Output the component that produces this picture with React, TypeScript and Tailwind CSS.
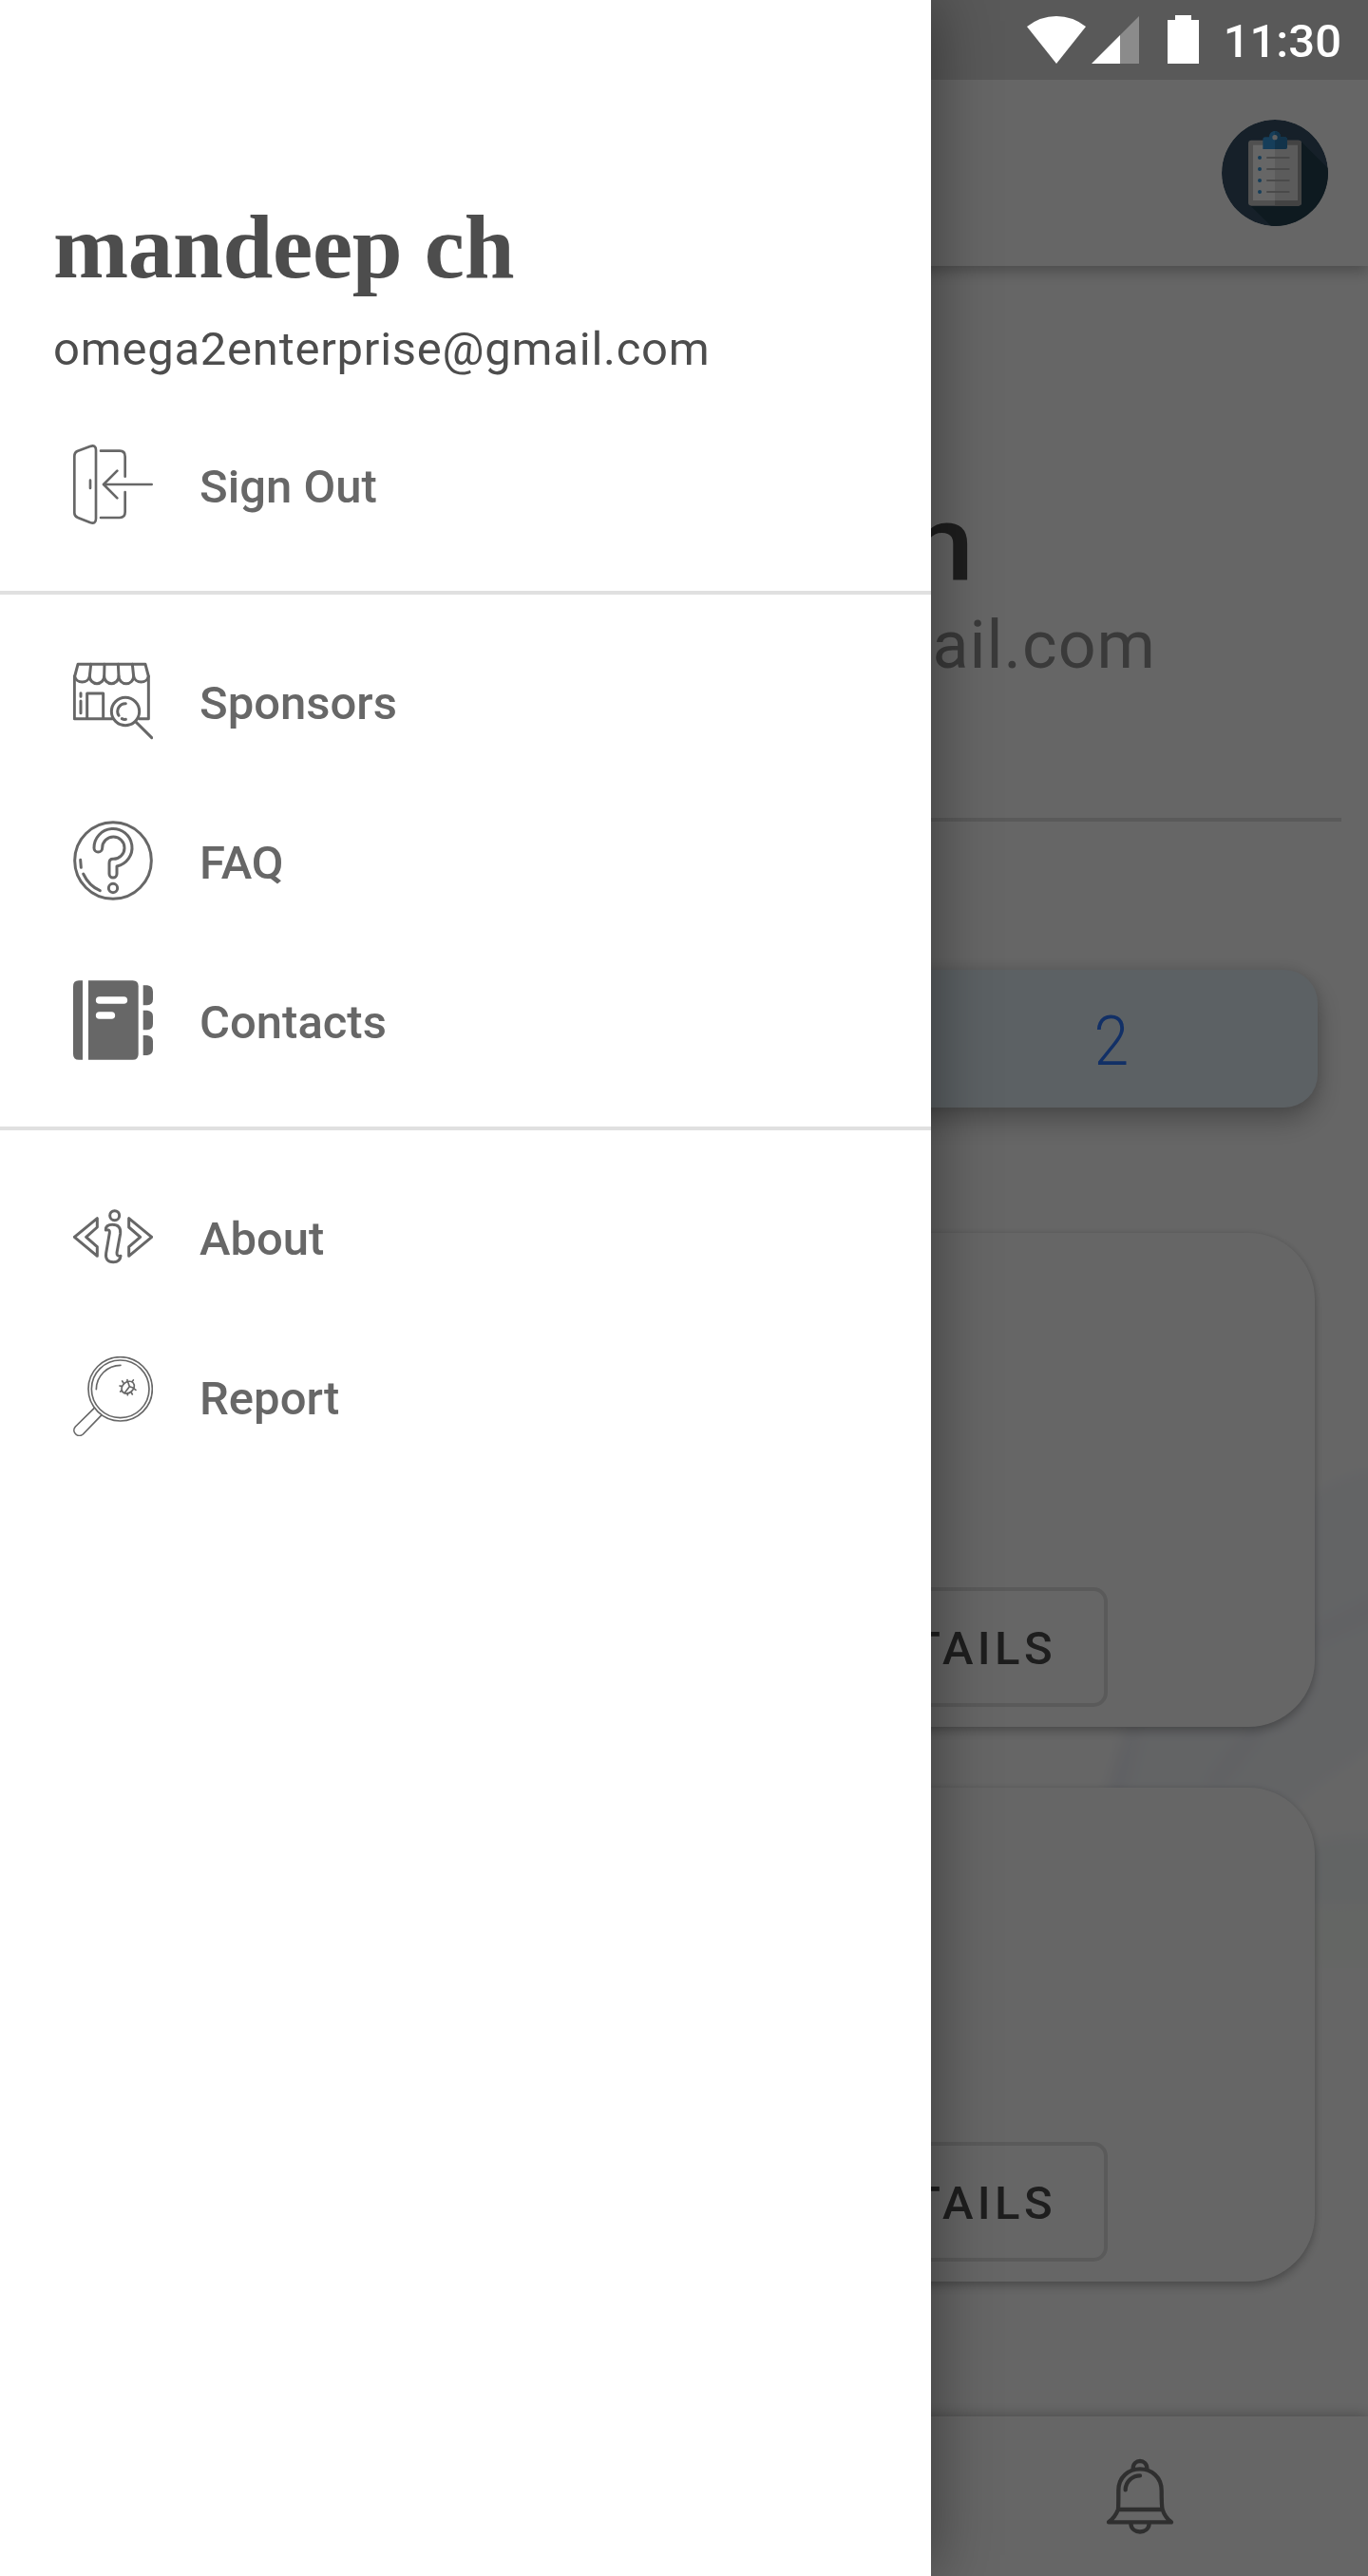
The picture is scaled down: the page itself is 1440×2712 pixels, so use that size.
import React from "react";

type IconProps = { box: string; stroke?: number; children: React.ReactNode };

function Icon({ box, stroke = 7, children }: IconProps) {
  return (
    <svg
      viewBox={box}
      className="size-[84px] shrink-0"
      fill="none"
      stroke="currentColor"
      strokeWidth={stroke}
      strokeLinecap="round"
      strokeLinejoin="round"
    >
      {children}
    </svg>
  );
}

const SignOutIcon = () => (
  <Icon box="51 54 252 252" stroke={8}>
    <path d="M55 90Q55 79 64 75L104 60Q123 53 123 72V288Q123 307 104 300L66 285Q55 281 55 270Z" />
    <path d="M105 167V192M138 74H198Q215 74 215 92V155M215 204V267Q215 285 198 285H138" />
    <path d="M299 180H148M190 137L147 180L190 223" />
  </Icon>
);

const SponsorsIcon = () => (
  <Icon box="51 48 252 252" stroke={9}>
    <path d="M66 58H279L289 96A24 23 0 0 1 242 96A23 23 0 0 1 195 96A23 23 0 0 1 149 96A23 23 0 0 1 103 96A24 23 0 0 1 56 96Z" />
    <path d="M107 58L103 96M150 58L149 96M193 58L195 96M238 58L242 96" />
    <path d="M55 96V230H174M289 96V230H260M95 230V150H146V230M75 149V160M75 174V212" />
    <circle cx="216" cy="207" r="44" />
    <path d="M217 182A25 25 0 0 0 195 220M205 230Q211 233 217 232M250 241L299 290" />
  </Icon>
);

const FaqIcon = () => (
  <Icon box="51 42 252 252" stroke={9}>
    <circle cx="177" cy="168" r="121" />
    <path d="M117 128A60 60 0 1 1 189 186V210A12 12 0 0 1 165 210V176Q165 163 177 163A35 35 0 1 0 143 128A13 13 0 0 1 117 128Z" />
    <circle cx="177" cy="255" r="14" />
    <path d="M74 166L76 190M83 210Q101 248 136 263" />
  </Icon>
);

const ContactsIcon = () => (
  <svg viewBox="51 546 252 252" className="size-[84px] shrink-0" fill="currentColor">
    <path d="M81 547V797H69Q51 797 51 779V565Q51 547 69 547Z" />
    <path d="M99 547H239Q257 547 257 565V779Q257 797 239 797H99Z" />
    <path d="M272 562H285Q303 564 303 582V606Q303 623 285 625H272ZM272 641H285Q303 643 303 660V684Q303 701 285 703H272ZM272 720H285Q303 722 303 739V763Q303 781 285 783H272Z" />
    <path d="M134 609H211M134 657H172" stroke="#fff" strokeWidth="23" strokeLinecap="round" />
  </svg>
);

const AboutIcon = () => (
  <Icon box="51 30 252 252" stroke={9}>
    <path d="M55 157L127 98V126L92 157L127 188V217ZM299 157L227 98V126L263 157L227 188V217Z" />
    <circle cx="182" cy="89" r="15" />
    <path d="M154 135Q153 118 175 118Q203 118 200 146L189 206Q188 219 201 217Q199 236 178 236Q151 236 155 208L166 144Q168 132 154 135Z" />
  </Icon>
);

const ReportIcon = () => (
  <Icon box="51 534 252 252" stroke={5}>
    <circle cx="200" cy="637" r="101" />
    <circle cx="200" cy="637" r="91" />
    <path d="M124 638A77 77 0 0 1 201 562M117 698L58 756A17 17 0 0 0 82 780L139 721" />
    <ellipse cx="224" cy="632" rx="22" ry="17" transform="rotate(-40 224 632)" />
    <path d="M224 615L229 629L214 649M229 629L242 634M222 615V608M210 618L206 612M204 628L198 627M205 642L200 645M223 650V656M234 647L238 654M243 636L249 640M237 614L241 609" />
  </Icon>
);

const BellIcon = () => (
  <Icon box="594 1067 252 252" stroke={13}>
    <path d="M651 1235Q652 1225 652 1175C652 1132 684 1107 720 1107C756 1107 788 1132 788 1175Q788 1225 791 1235Q799 1260 819 1275H621Q641 1260 651 1235H789" />
    <path d="M698 1106C698 1074 742 1074 742 1106M691 1280C694 1314 746 1314 749 1280M674 1173C675 1143 699 1128 720 1128" />
  </Icon>
);

function ClipboardAvatar() {
  return (
    <svg viewBox="978 378 336 336" className="size-28 rounded-full">
      <circle cx="1146" cy="546" r="168" fill="#375268" />
      <path d="M1228 446L1314 532V714H1134L1064 645Z" fill="#234150" />
      <rect x="1062" y="443" width="168" height="207" rx="10" fill="#c8c8c8" />
      <path d="M1146 443H1220Q1230 443 1230 453V640Q1230 650 1220 650H1146Z" fill="#a8a8a8" />
      <path d="M1077 458H1146V633H1077Z" fill="#fff" />
      <path d="M1146 458H1218V633H1146Z" fill="#e3e3e3" />
      <path d="M1108 471V441Q1108 433 1116 433H1128C1128 408 1164 408 1164 433H1177Q1185 433 1185 441V464Q1185 471 1178 471Z" fill="#379be0" />
      <path d="M1146 415Q1164 416 1164 433H1177Q1185 433 1185 441V464Q1185 471 1178 471H1146Z" fill="#2d80b8" />
      <circle cx="1146" cy="434" r="8" fill="#eee" />
      {[498, 534, 570, 606].map((y) => (
        <g key={y}>
          <circle cx="1098" cy={y} r="6" fill="#379be0" />
          <path d={`M1122 ${y}H1190`} stroke="#b9b9b9" strokeWidth="6" strokeLinecap="round" />
        </g>
      ))}
    </svg>
  );
}

function StatusBar() {
  return (
    <div className="absolute inset-x-0 top-0 z-10 flex h-[84px] items-center justify-end bg-black/12 pr-7 text-white">
      <svg viewBox="0 0 182 52" className="mr-[25px] h-[52px] w-[182px]" fill="currentColor">
        <path d="M0 12Q14 1 31 1Q48 1 62 12L31 51Z" />
        <path d="M68 51L98 21V51Z" />
        <path d="M98 21L118 1V51H98Z" opacity=".3" />
        <path d="M148 5H156V0H173V5H181V51H148Z" />
      </svg>
      <span className="pt-[3px] text-[49px] leading-none font-medium">11:30</span>
    </div>
  );
}

function MenuItem({ icon, label }: { icon: React.ReactNode; label: string }) {
  return (
    <a className="flex h-[168px] items-center gap-[49px] pl-[77px] text-[#676767]">
      {icon}
      <span className="pt-1 text-[49px] leading-none font-medium">{label}</span>
    </a>
  );
}

function DetailCard() {
  return (
    <article className="flex h-[520px] items-end justify-end rounded-[70px] bg-white pr-[218px] pb-[21px] shadow-[0_6px_10px_rgba(0,0,0,0.2),0_0_6px_rgba(0,0,0,0.12)]">
      <button className="h-[126px] rounded-[15px] border-4 border-black/12 pt-[3px] pr-[50px] pl-14 text-[49px] leading-none font-medium tracking-[4.4px] text-[#4d4d4d]">
        DETAILS
      </button>
    </article>
  );
}

function Backdrop() {
  return (
    <svg viewBox="0 0 300 820" className="absolute top-[1480px] right-0 h-[820px] w-[300px]">
      <defs>
        <filter id="soft">
          <feGaussianBlur stdDeviation="7" />
        </filter>
      </defs>
      <g filter="url(#soft)">
        <path d="M330 65Q260 70 225 110L140 240L50 340L20 460H180L245 400L330 340V65Z" fill="#f7f9fd" />
        <path d="M225 240Q270 225 330 190V215Q270 235 225 262Z" fill="#f1f2f9" />
        <path d="M48 330L20 420H42L62 330ZM178 335L130 400H144L194 335Z" fill="#eff1f8" />
        <path d="M235 462Q270 450 330 455V525H235Z" fill="#f5f9fb" />
        <path d="M235 530L330 525V590H235Z" fill="#fbfefb" />
      </g>
    </svg>
  );
}

export default function App() {
  return (
    <div className="relative h-[2712px] w-[1440px] overflow-hidden bg-white font-[Roboto,sans-serif]">
      <div className="relative flex h-full flex-col">
        <Backdrop />
        <header className="relative flex h-[280px] items-center justify-end bg-white pt-[84px] pr-[42px] shadow-[0_6px_14px_rgba(0,0,0,0.25)]">
          <ClipboardAvatar />
        </header>
        <main className="relative flex grow flex-col">
          <section className="mx-7 flex h-[585px] flex-col items-center border-b-4 border-black/12 pt-[237px]">
            <h1 className="scale-x-[1.12] pr-1.5 text-[112px] leading-[112px] font-medium tracking-[-8px] text-[#4d4d4d]">mandeep ch</h1>
            <p className="mt-[10px] self-end pr-[195px] text-[70px] leading-[80px] tracking-[1px] text-[#929292]">@gmail.com</p>
          </section>
          <div className="mx-[53px] mt-[156px] flex h-[145px] items-center justify-end rounded-[35px] bg-[#e6f2fa] shadow-[0_14px_28px_rgba(0,0,0,0.26),0_0_14px_rgba(0,0,0,0.12)]">
            <div className="flex w-[435px] justify-center pt-1.5 text-[72px] leading-none font-light text-[#2d78ff]">
              <span className="scale-x-[0.92]">2</span>
            </div>
          </div>
          <div className="mx-14 mt-[132px] flex flex-col gap-16">
            <DetailCard />
            <DetailCard />
          </div>
        </main>
        <nav className="relative grid h-[168px] grid-cols-3 items-center bg-white shadow-[0_0_14px_rgba(0,0,0,0.3)]">
          <a className="col-start-3 flex justify-center text-[#777]">
            <BellIcon />
          </a>
        </nav>
      </div>
      <div className="absolute inset-0 bg-black/60" />
      <StatusBar />
      <aside className="absolute inset-y-0 left-0 z-20 flex w-[980px] flex-col bg-white shadow-[0_0_64px_rgba(0,0,0,0.45)]">
        <div className="flex h-[426px] flex-col pl-14 text-[#4d4d4d]">
          <h2 className="mt-[207px] font-['Liberation_Serif',serif] text-[95px] leading-[106px] font-bold tracking-[-0.3px]">mandeep ch</h2>
          <p className="mt-[25px] text-[49px] leading-[60px] tracking-[0.75px]">omega2enterprise@gmail.com</p>
        </div>
        <MenuItem icon={<SignOutIcon />} label="Sign Out" />
        <hr className="mt-7 border-0 border-t-4 border-[#e0e0e0]" />
        <div className="py-7">
          <MenuItem icon={<SponsorsIcon />} label="Sponsors" />
          <MenuItem icon={<FaqIcon />} label="FAQ" />
          <MenuItem icon={<ContactsIcon />} label="Contacts" />
        </div>
        <hr className="border-0 border-t-4 border-[#e0e0e0]" />
        <div className="py-7">
          <MenuItem icon={<AboutIcon />} label="About" />
          <MenuItem icon={<ReportIcon />} label="Report" />
        </div>
      </aside>
    </div>
  );
}
